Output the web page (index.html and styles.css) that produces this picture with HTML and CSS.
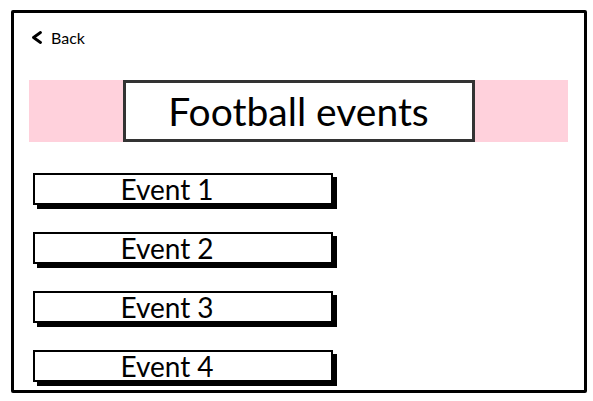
FILE: index.html
```html
<!DOCTYPE html>
<html lang="en">
<head>
    <meta charset="UTF-8">
    <meta name="viewport" content="width=device-width, initial-scale=1.0">
    <title>Football events</title>
    <link rel="stylesheet" href="styles.css">
</head>
<body>
    <div class="frame">
        <div class="back">
            <svg class="chevron" width="12" height="13" viewBox="0 0 12 13">
                <path d="M9.5 1.5 L2.5 6.5 L9.5 11.5" fill="none" stroke="#000" stroke-width="2.8" stroke-linecap="round" stroke-linejoin="round"/>
            </svg>
            <span>Back</span>
        </div>
        <div class="band">
            <div class="title">Football events</div>
        </div>
        <div class="events">
            <div class="event">Event 1</div>
            <div class="event">Event 2</div>
            <div class="event">Event 3</div>
            <div class="event">Event 4</div>
        </div>
    </div>
</body>
</html>
```

FILE: styles.css
```css
body {
    margin: 0;
    background: #fff;
    font-family: Lato, "Noto Sans", sans-serif;
    color: #000;
}
.frame {
    box-sizing: border-box;
    width: 576px;
    height: 383px;
    margin: 10px 0 0 11px;
    border: 3px solid #000;
    border-radius: 2px;
    padding: 16px 16px 0 15px;
}
.back {
    display: flex;
    align-items: center;
    gap: 8px;
    height: 16px;
    padding-left: 2px;
    font-size: 16px;
}
.chevron {
    display: block;
}
.band {
    margin-top: 35px;
    height: 62px;
    background: #ffd1dc;
    display: flex;
    justify-content: center;
}
.title {
    box-sizing: border-box;
    width: 352px;
    height: 62px;
    border: 3px solid #333;
    background: #fff;
    display: flex;
    align-items: center;
    justify-content: center;
    font-size: 39px;
}
.events {
    display: flex;
    flex-direction: column;
    gap: 27px;
    margin-top: 31px;
    padding-left: 4px;
}
.event {
    box-sizing: border-box;
    width: 300px;
    height: 32px;
    border: 2px solid #000;
    box-shadow: 4px 4px 0 #000;
    padding-right: 32px;
    text-align: center;
    font-size: 28px;
    line-height: 28px;
}
```
